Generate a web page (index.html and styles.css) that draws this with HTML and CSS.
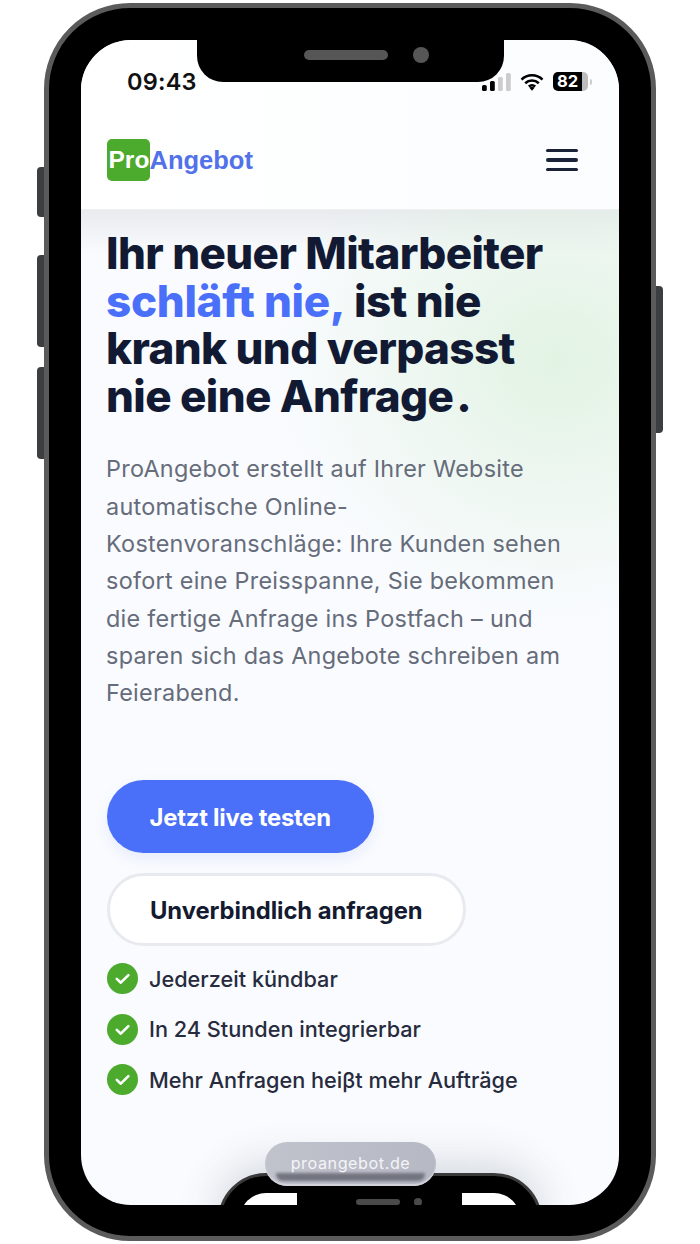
FILE: index.html
```html
<!DOCTYPE html>
<html lang="de">
<head>
<meta charset="utf-8">
<title>ProAngebot</title>
<link rel="stylesheet" href="styles.css">
</head>
<body>
<div class="phone">
  <span class="side side-mute"></span>
  <span class="side side-up"></span>
  <span class="side side-down"></span>
  <span class="side side-power"></span>
  <div class="notch"><span class="speaker"></span><span class="camera"></span></div>
  <div class="screen">
    <div class="top">
      <div class="status">
        <span class="time">09:43</span>
        <div class="status-icons">
          <svg class="signal" width="29" height="18" viewBox="0 0 29 18"><rect x="0" y="12" width="4.8" height="6" rx="1.6" fill="#000"/><rect x="8" y="8" width="4.8" height="10" rx="1.6" fill="#000"/><rect x="16" y="4" width="4.8" height="14" rx="1.6" fill="#ccc"/><rect x="24" y="0" width="4.8" height="18" rx="1.6" fill="#ccc"/></svg>
          <svg class="wifi" width="24" height="18" viewBox="0 0 24 18"><path d="M1.5 6.6a15 15 0 0 1 21 0M5.2 10.2a10 10 0 0 1 13.6 0M8.8 13.6a5 5 0 0 1 6.4 0" fill="none" stroke="#000" stroke-width="2.6"/><path d="M9.4 14.8a4 4 0 0 1 5.2 0L12 17.8z" fill="#000"/></svg>
          <div class="battery"><span class="battery-level">82</span><span class="battery-rest"></span><span class="battery-tip"></span></div>
        </div>
      </div>
      <header class="nav">
        <div class="logo"><span class="logo-pro">Pro</span><span class="logo-rest">Angebot</span></div>
        <div class="burger"><span></span><span></span><span></span></div>
      </header>
    </div>
    <main class="hero">
      <h1 class="title">Ihr neuer Mitarbeiter <em>schläft nie,</em> ist nie krank und verpasst nie eine Anfrage<span class="dot">.</span></h1>
      <p class="lead">ProAngebot erstellt auf Ihrer Website automatische Online-<br>Kostenvoranschläge: Ihre Kunden sehen sofort eine Preisspanne, Sie bekommen die fertige Anfrage ins Postfach – und sparen sich das Angebote schreiben am Feierabend.</p>
      <div class="actions">
        <a class="btn btn-primary">Jetzt live testen</a>
        <a class="btn btn-outline">Unverbindlich anfragen</a>
      </div>
      <ul class="checks">
        <li><svg width="31" height="31" viewBox="0 0 31 31"><circle cx="15.5" cy="15.5" r="15.5" fill="#4caa2c"/><path d="M9.8 15.9l4 3.8 7.6-7.6" fill="none" stroke="#fff" stroke-width="2.6" stroke-linecap="round" stroke-linejoin="round"/></svg>Jederzeit kündbar</li>
        <li><svg width="31" height="31" viewBox="0 0 31 31"><circle cx="15.5" cy="15.5" r="15.5" fill="#4caa2c"/><path d="M9.8 15.9l4 3.8 7.6-7.6" fill="none" stroke="#fff" stroke-width="2.6" stroke-linecap="round" stroke-linejoin="round"/></svg>In 24 Stunden integrierbar</li>
        <li><svg width="31" height="31" viewBox="0 0 31 31"><circle cx="15.5" cy="15.5" r="15.5" fill="#4caa2c"/><path d="M9.8 15.9l4 3.8 7.6-7.6" fill="none" stroke="#fff" stroke-width="2.6" stroke-linecap="round" stroke-linejoin="round"/></svg>Mehr Anfragen heiβt mehr Aufträge</li>
      </ul>
    </main>
    <div class="mini-phone">
      <div class="mini-notch"><span class="mini-speaker"></span><span class="mini-camera"></span></div>
    </div>
  </div>
  <div class="url-pill"><span class="url-text">proangebot.de</span></div>
</div>
</body>
</html>
```
FILE: styles.css
```css
* { box-sizing: border-box; }
html, body { margin: 0; padding: 0; background: #fff; }
body { width: 700px; height: 1244px; overflow: hidden; font-family: "Inter", "Liberation Sans", sans-serif; }

.phone {
  position: relative;
  width: 612px;
  height: 1238px;
  margin: 3px 0 0 44px;
  padding: 32px;
  background: #000;
  border: 5px solid #5b5b5b;
  border-radius: 86px;
}
.side { position: absolute; width: 7px; background: #3c3e40; }
.side-mute { left: -12px; top: 159px; height: 50px; border-radius: 4px 0 0 4px; }
.side-up { left: -12px; top: 247px; height: 92px; border-radius: 4px 0 0 4px; }
.side-down { left: -12px; top: 359px; height: 92px; border-radius: 4px 0 0 4px; }
.side-power { right: -12px; top: 278px; height: 147px; border-radius: 0 4px 4px 0; }

.notch {
  position: absolute; z-index: 3; left: 148px; top: 32px;
  width: 307px; height: 42px;
  background: #000;
  border-radius: 0 0 26px 26px;
  display: flex; align-items: flex-start; justify-content: center; gap: 25px;
  padding: 10px 0 0 32px;
}
.speaker { width: 84px; height: 10px; border-radius: 5px; background: #565656; }
.camera { width: 16px; height: 16px; margin-top: -3px; border-radius: 50%; background: #565656; }

.screen {
  position: relative;
  width: 538px;
  height: 1165px;
  overflow: hidden;
  border-radius: 50px;
  background:
    radial-gradient(ellipse 280px 260px at 475px 320px, rgba(218,240,218,.75), rgba(218,240,218,.32) 55%, rgba(218,240,218,0) 100%),
    linear-gradient(180deg, rgba(225,228,232,.7) 169px, rgba(225,228,232,0) 215px),
    #f9fbfe;
}

.top {
  height: 169px;
  background: linear-gradient(90deg, #fff, #fbfdfe);
  box-shadow: 0 1px 0 #eef0f2;
  position: relative;
}
.status { display: flex; justify-content: space-between; align-items: center; height: 83px; padding: 0 27px 0 46px; }
.time { font: 600 23.5px "Inter", sans-serif; color: #111; letter-spacing: .2px; }
.status-icons { display: flex; align-items: center; gap: 9px; }
.signal, .wifi { display: block; }
.battery { display: flex; align-items: center; height: 19px; }
.battery-level { width: 29px; height: 19px; background: #000; color: #fff; font: 700 16.5px/19px "Inter", sans-serif; text-align: center; border-radius: 5px 0 0 5px; }
.battery-rest { width: 6px; height: 19px; background: #bdbdbd; border-radius: 0 5px 5px 0; }
.battery-tip { width: 2px; height: 6px; background: #ccc; border-radius: 0 2px 2px 0; margin-left: 2px; }

.nav { display: flex; justify-content: space-between; align-items: center; height: 42px; margin-top: 16px; padding: 0 41px 0 26px; }
.logo { display: flex; align-items: center; font: 700 25.5px/42px "Liberation Sans", sans-serif; }
.logo-pro { width: 42.5px; height: 42px; padding-left: 1.5px; font-size: 24.5px; background: #4caa2c; color: #fff; border-radius: 5px; white-space: nowrap; }
.logo-rest { color: #5272ea; }
.burger { display: flex; flex-direction: column; gap: 6px; width: 32px; }
.burger span { display: block; height: 3.5px; background: #1a2238; border-radius: 2px; }

.hero { padding: 21px 26px 0; }
.title {
  margin: 0 0 0 -1px;
  font: 800 44px/47.6px "Inter", sans-serif;
  letter-spacing: -.62px;
  color: #121a33;
  width: 445px;
}
.title em { display: inline-block; font-style: normal; color: #4a6ff8; letter-spacing: -.3px; }
.dot { display: inline-block; margin-left: 3px; }
.lead {
  margin: 30px 0 0 -1px;
  font: 400 23.4px/37.3px "Inter", sans-serif;
  color: #666c7a;
  letter-spacing: .28px;
  width: 472px;
}
.actions { display: flex; flex-direction: column; align-items: flex-start; gap: 20px; margin-top: 69px; }
.btn {
  display: flex; align-items: center;
  height: 73px;
  padding-top: 2px;
  border-radius: 37px;
  font: 700 23.8px "Inter", sans-serif;
  letter-spacing: -.2px;
  white-space: nowrap;
}
.btn-primary { width: 267px; padding-left: 42.5px; background: #4a6ff8; color: #fff; box-shadow: 0 6px 14px rgba(74,111,248,.1); }
.btn-outline { width: 359px; padding-left: 40px; letter-spacing: -.06px; background: #fff; color: #141a30; border: 3px solid #e8eaf0; }

.checks { list-style: none; margin: 17px 0 0; padding: 0; display: flex; flex-direction: column; gap: 19.5px; }
.checks li { display: flex; align-items: center; gap: 11px; height: 31px; font: 500 21.7px "Inter", sans-serif; color: #272b3d; white-space: nowrap; }
.checks svg { display: block; flex: none; }

.mini-phone {
  position: absolute; left: 137px; top: 1133px;
  width: 324px; height: 120px;
  background: #000;
  border: 3px solid #3a3a3a;
  border-radius: 48px;
  box-shadow: 0 -10px 40px rgba(70,80,100,.2);
  overflow: hidden;
}
.mini-phone::before {
  content: "";
  position: absolute; left: 19px; right: 19px; top: 17px; height: 60px;
  background: #fff;
  border-radius: 26px 26px 0 0;
}
.mini-notch {
  position: absolute; z-index: 1; left: 76px; top: 14px;
  width: 165px; height: 24px; background: #000;
  display: flex; justify-content: center; align-items: center; gap: 14px;
  padding-left: 19px;
}
.mini-speaker { width: 44px; height: 6px; border-radius: 3px; background: #4a4a4a; }
.mini-camera { width: 8px; height: 8px; border-radius: 50%; background: #4a4a4a; }

.url-pill {
  position: absolute; z-index: 4; left: 216px; top: 1134px;
  width: 171px; height: 44px;
  border-radius: 22px;
  overflow: hidden;
  background: linear-gradient(90deg, #c0c2cc, #b6b8c4);
  box-shadow: inset 0 -2px 1px #d3d4db;
  display: flex; align-items: flex-start; justify-content: center;
  padding-top: 12px;
}
.url-pill::after {
  content: "";
  position: absolute; left: 11px; right: 11px; top: 31px; height: 8px;
  border-radius: 2px 2px 10px 10px;
  background: #72747f;
  filter: blur(1.5px);
}
.url-text { position: relative; z-index: 1; font: 400 16.2px/18px "Inter", sans-serif; color: #f4f4f7; letter-spacing: .55px; }
```
